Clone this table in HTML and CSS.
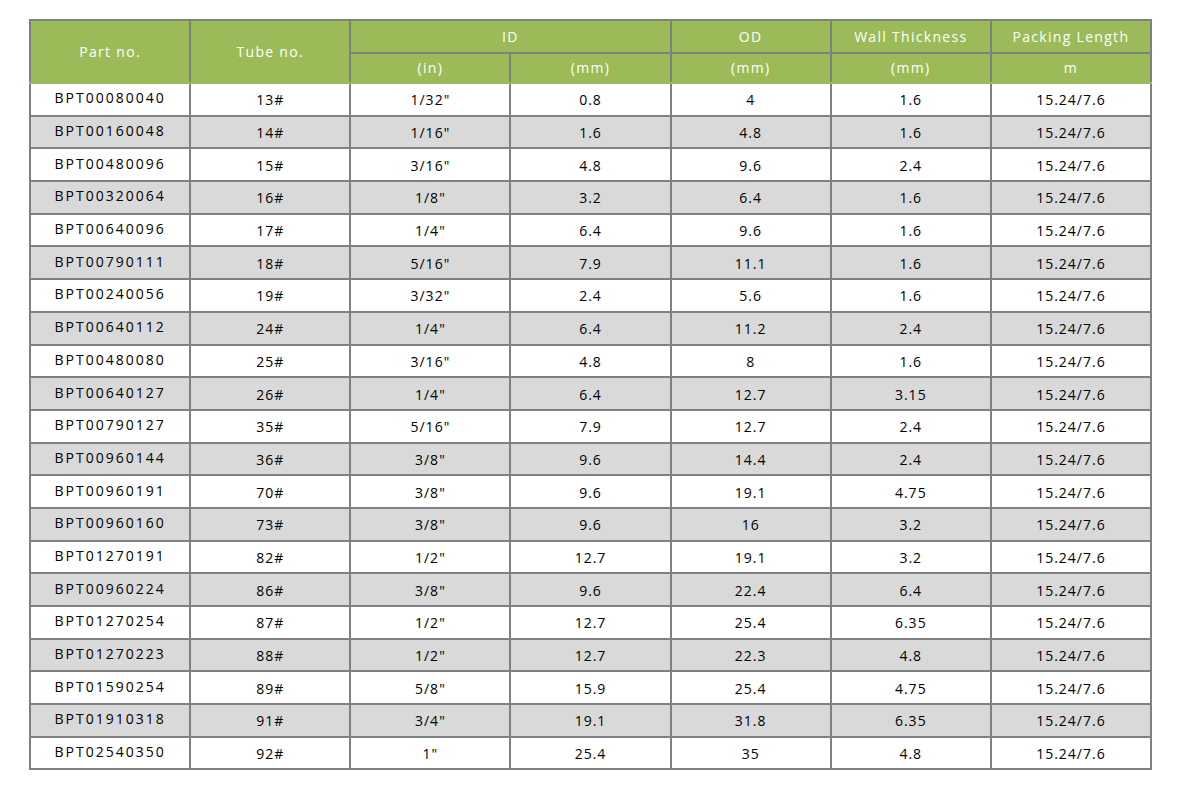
FILE: index.html
```html
<!DOCTYPE html>
<html>
<head>
<meta charset="utf-8">
<link rel="stylesheet" href="styles.css">
</head>
<body>
<table class="spec">
  <colgroup>
    <col class="c"><col class="c"><col class="c"><col class="c"><col class="c"><col class="c"><col class="c">
  </colgroup>
  <thead>
    <tr class="h1">
      <th rowspan="2" class="span2">Part no.</th>
      <th rowspan="2" class="span2">Tube no.</th>
      <th colspan="2">ID</th>
      <th>OD</th>
      <th>Wall Thickness</th>
      <th>Packing Length</th>
    </tr>
    <tr class="h2">
      <th>(in)</th>
      <th>(mm)</th>
      <th>(mm)</th>
      <th>(mm)</th>
      <th>m</th>
    </tr>
  </thead>
  <tbody>
    <tr><td class="pn">BPT00080040</td><td>13#</td><td>1/32"</td><td>0.8</td><td>4</td><td>1.6</td><td>15.24/7.6</td></tr>
    <tr class="alt"><td class="pn">BPT00160048</td><td>14#</td><td>1/16"</td><td>1.6</td><td>4.8</td><td>1.6</td><td>15.24/7.6</td></tr>
    <tr><td class="pn">BPT00480096</td><td>15#</td><td>3/16"</td><td>4.8</td><td>9.6</td><td>2.4</td><td>15.24/7.6</td></tr>
    <tr class="alt"><td class="pn">BPT00320064</td><td>16#</td><td>1/8"</td><td>3.2</td><td>6.4</td><td>1.6</td><td>15.24/7.6</td></tr>
    <tr><td class="pn">BPT00640096</td><td>17#</td><td>1/4"</td><td>6.4</td><td>9.6</td><td>1.6</td><td>15.24/7.6</td></tr>
    <tr class="alt"><td class="pn">BPT00790111</td><td>18#</td><td>5/16"</td><td>7.9</td><td>11.1</td><td>1.6</td><td>15.24/7.6</td></tr>
    <tr><td class="pn">BPT00240056</td><td>19#</td><td>3/32"</td><td>2.4</td><td>5.6</td><td>1.6</td><td>15.24/7.6</td></tr>
    <tr class="alt"><td class="pn">BPT00640112</td><td>24#</td><td>1/4"</td><td>6.4</td><td>11.2</td><td>2.4</td><td>15.24/7.6</td></tr>
    <tr><td class="pn">BPT00480080</td><td>25#</td><td>3/16"</td><td>4.8</td><td>8</td><td>1.6</td><td>15.24/7.6</td></tr>
    <tr class="alt"><td class="pn">BPT00640127</td><td>26#</td><td>1/4"</td><td>6.4</td><td>12.7</td><td>3.15</td><td>15.24/7.6</td></tr>
    <tr><td class="pn">BPT00790127</td><td>35#</td><td>5/16"</td><td>7.9</td><td>12.7</td><td>2.4</td><td>15.24/7.6</td></tr>
    <tr class="alt"><td class="pn">BPT00960144</td><td>36#</td><td>3/8"</td><td>9.6</td><td>14.4</td><td>2.4</td><td>15.24/7.6</td></tr>
    <tr><td class="pn">BPT00960191</td><td>70#</td><td>3/8"</td><td>9.6</td><td>19.1</td><td>4.75</td><td>15.24/7.6</td></tr>
    <tr class="alt"><td class="pn">BPT00960160</td><td>73#</td><td>3/8"</td><td>9.6</td><td>16</td><td>3.2</td><td>15.24/7.6</td></tr>
    <tr><td class="pn">BPT01270191</td><td>82#</td><td>1/2"</td><td>12.7</td><td>19.1</td><td>3.2</td><td>15.24/7.6</td></tr>
    <tr class="alt"><td class="pn">BPT00960224</td><td>86#</td><td>3/8"</td><td>9.6</td><td>22.4</td><td>6.4</td><td>15.24/7.6</td></tr>
    <tr><td class="pn">BPT01270254</td><td>87#</td><td>1/2"</td><td>12.7</td><td>25.4</td><td>6.35</td><td>15.24/7.6</td></tr>
    <tr class="alt"><td class="pn">BPT01270223</td><td>88#</td><td>1/2"</td><td>12.7</td><td>22.3</td><td>4.8</td><td>15.24/7.6</td></tr>
    <tr><td class="pn">BPT01590254</td><td>89#</td><td>5/8"</td><td>15.9</td><td>25.4</td><td>4.75</td><td>15.24/7.6</td></tr>
    <tr class="alt"><td class="pn">BPT01910318</td><td>91#</td><td>3/4"</td><td>19.1</td><td>31.8</td><td>6.35</td><td>15.24/7.6</td></tr>
    <tr><td class="pn">BPT02540350</td><td>92#</td><td>1"</td><td>25.4</td><td>35</td><td>4.8</td><td>15.24/7.6</td></tr>
  </tbody>
</table>
</body>
</html>
```
FILE: styles.css
```css
html, body {
  margin: 0;
  padding: 0;
  background: #ffffff;
}
body {
  padding: 19px 0 0 29px;
  font-family: "Open Sans", "Noto Sans", sans-serif;
  font-size: 14px;
  color: #000000;
}
.spec {
  border-collapse: collapse;
  table-layout: fixed;
  width: 1123px;
}
.spec .c {
  width: 160px;
}
.spec th,
.spec td {
  border: 2px solid #808080;
  padding: 0;
  text-align: center;
  vertical-align: middle;
  white-space: nowrap;
  line-height: 18px;
}
.spec th {
  background: #9bbb59;
  color: #ffffff;
  font-weight: 500;
  letter-spacing: 1.3px;
}
.spec .h1 th {
  height: 31px;
}
.spec .h2 th {
  height: 28px;
  border-bottom-color: #9bbb59;
}
.spec th.span2 {
  border-bottom-color: #9bbb59;
}
.spec td {
  height: 32.7px;
  font-weight: 500;
  letter-spacing: 1px;
  padding-top: 2px;
  box-sizing: border-box;
}
.spec td.pn {
  letter-spacing: 2px;
  padding-top: 0;
  padding-bottom: 2px;
}
.spec tr.alt td {
  background: #d9d9d9;
}
```
